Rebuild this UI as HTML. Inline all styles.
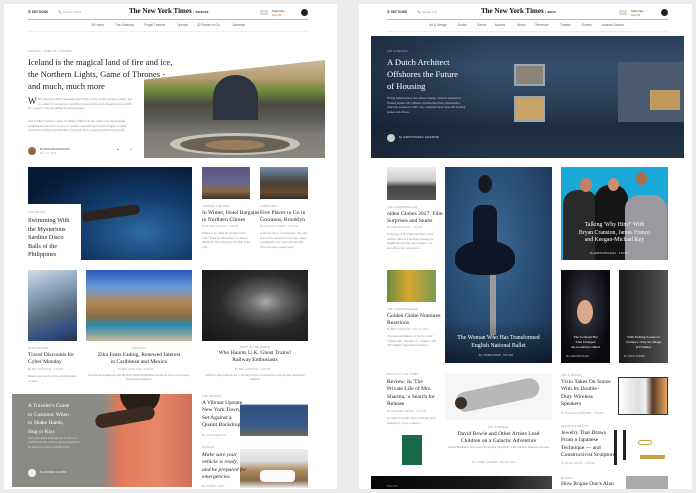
<!DOCTYPE html>
<html><head><meta charset="utf-8"><style>
*{margin:0;padding:0;box-sizing:border-box}
body{width:696px;height:493px;background:#ececec;position:relative;overflow:hidden;font-family:"Liberation Serif",serif;color:#222}
.a{position:absolute}
.p{background:#fff}
.sans{font-family:"Liberation Sans",sans-serif}
.k{font-family:"Liberation Sans",sans-serif;font-size:2.6px;color:#999;letter-spacing:.2px;white-space:nowrap}
.h{font-size:5.6px;line-height:7.3px;color:#222}
.b{font-size:3px;line-height:4.6px;color:#888}
.by{font-family:"Liberation Sans",sans-serif;font-size:2.6px;color:#aaa;white-space:nowrap}
.nav{font-family:"Liberation Sans",sans-serif;font-size:3.2px;color:#666;white-space:nowrap}
.logo{font-family:"Liberation Serif",serif;font-weight:bold;font-size:7px;color:#111;white-space:nowrap}
.rule{height:1px;background:#bbb}
.lrule{height:1px;background:#eee}
</style></head><body>

<!-- LEFT PANEL -->
<div class="a p" style="left:4px;top:4px;width:333px;height:485px"></div>
<div class="a sans" style="left:28px;top:10px;font-size:3.2px;font-weight:bold;color:#333">☰ SECTIONS</div>
<div class="a sans" style="left:58px;top:10px;font-size:3px;color:#999">🔍 Search Travel</div>
<div class="a logo" style="left:129px;top:7px">The New York Times <span style="font-size:3.5px">| TRAVEL</span></div>
<div class="a" style="left:260px;top:10px;width:8px;height:5px;background:#ddd"></div>
<div class="a sans" style="left:272px;top:9px;font-size:2.8px;color:#333">Subscribe<br><span style="color:#c60">Now $1</span></div>
<div class="a" style="left:301px;top:9px;width:7px;height:7px;border-radius:50%;background:#222"></div>
<div class="a rule" style="left:28px;top:19px;width:280px"></div>
<div class="a nav" style="left:91px;top:23px">36 Hours</div>
<div class="a nav" style="left:115px;top:23px">The Getaway</div>
<div class="a nav" style="left:144px;top:23px">Frugal Traveler</div>
<div class="a nav" style="left:177px;top:23px">Opinion</div>
<div class="a nav" style="left:197px;top:23px">52 Places to Go</div>
<div class="a nav" style="left:232px;top:23px">Journeys</div>
<div class="a lrule" style="left:28px;top:31px;width:280px"></div>

<div class="a k" style="left:28px;top:50px">ICELAND · GAME OF THRONES</div>
<div class="a" style="left:28px;top:56px;font-size:8.6px;line-height:12px;white-space:nowrap;color:#222">Iceland is the magical land of fire and ice,<br>the Northern Lights, Game of Thrones -<br>and much, much more</div>
<div class="a b" style="left:28px;top:97px;width:105px"><span style="font-size:9px;float:left;line-height:8px;color:#222;margin-right:2px">W</span>ith cheap and 100% renewable electricity, it's the world's greatest country, has no armed forces and has cheerfully bounced back from financial ruin in 2008. It's a place to stay and admire in equal measure.</div>
<div class="a b" style="left:28px;top:119px;width:105px">And northern Iceland, a mere 55-minute flight from the capital over the beautiful, uninhabitable interior is a place of wonder, with dancing Northern Lights, weirdly beautiful lava fields, innumerable volcanoes, snow-capped mountains and fjords.</div>
<div class="a" style="left:28px;top:147px;width:8px;height:8px;border-radius:50%;background:#8a6a4a"></div>
<div class="a by" style="left:40px;top:148px;color:#444">By RICHARD MORGANS</div>
<div class="a by" style="left:40px;top:152px">Dec. 23, 2016</div>
<div class="a by" style="left:117px;top:148px;color:#333">➦</div>
<div class="a by" style="left:130px;top:148px;color:#333">▯</div>
<!-- hero -->
<div class="a" style="left:144px;top:60px;width:181px;height:98px;background:linear-gradient(180deg,#c9b99b 0%,#b79e74 18%,#6a8a3a 32%,#4d4a42 45%,#5c5b58 60%,#7d7b77 75%,#8c8780 100%);clip-path:polygon(0 20%,60% 8%,100% 0,100% 100%,0 100%)"></div>
<div class="a" style="left:213px;top:75px;width:45px;height:45px;border-radius:22px 22px 0 0;background:#2d3440"></div>
<div class="a" style="left:170px;top:133px;width:130px;height:22px;border-radius:50%;background:#c9c4b9"></div>
<div class="a" style="left:180px;top:136px;width:110px;height:17px;border-radius:50%;background:#6a6256"></div>
<div class="a" style="left:205px;top:140px;width:60px;height:10px;border-radius:50%;background:#9a7d5a"></div>

<!-- row 2 -->
<div class="a" style="left:28px;top:167px;width:164px;height:93px;background:radial-gradient(ellipse at 70% 70%,#2f6aa3 0%,#123a6a 40%,#061a35 80%)"></div>
<div class="a" style="left:82px;top:208px;width:58px;height:10px;border-radius:5px;background:#2b2420;transform:rotate(-8deg)"></div>
<div class="a p" style="left:28px;top:204px;width:53px;height:56px"></div>
<div class="a k" style="left:28px;top:211px">TRILOBITES</div>
<div class="a" style="left:28px;top:217px;font-size:6.3px;line-height:8.6px;white-space:nowrap">Swimming With<br>the Mysterious<br>Sardine Disco<br>Balls of the<br>Philippines</div>

<div class="a" style="left:202px;top:167px;width:48px;height:32px;background:linear-gradient(180deg,#5a5580 0%,#6a6590 50%,#8a6a3a 75%,#3a3028 100%)"></div>
<div class="a k" style="left:202px;top:205px">CHASING THE DEAL</div>
<div class="a h" style="left:202px;top:210px;white-space:nowrap">In Winter, Hotel Bargains<br>in Northern Climes</div>
<div class="a by" style="left:202px;top:225px">By ELAINE GLUSAC · 3:29 PM</div>
<div class="a b" style="left:202px;top:231px;width:48px">Where to go when the weather turns cold? There are discounts to be had in Montreal, New York City and Salt Lake City.</div>

<div class="a" style="left:260px;top:167px;width:48px;height:32px;background:linear-gradient(180deg,#6a8aa8 0%,#4a4038 50%,#6a4a30 80%,#2a2a2a 100%)"></div>
<div class="a k" style="left:260px;top:205px">SURFACING</div>
<div class="a h" style="left:260px;top:210px;white-space:nowrap">Five Places to Go in<br>Gowanus, Brooklyn</div>
<div class="a by" style="left:260px;top:225px">By ANTHONY TOMAS · 3:29 PM</div>
<div class="a b" style="left:260px;top:231px;width:48px">A diverse array of restaurants, bars and stores have opened in Gowanus, where a manmade toxic canal and desolate vibe once kept people away.</div>

<!-- row 3 -->
<div class="a" style="left:28px;top:270px;width:49px;height:71px;background:linear-gradient(160deg,#d8dde3 0%,#8aa6c0 30%,#5a6a80 60%,#2a4a80 85%,#333 100%)"></div>
<div class="a k" style="left:28px;top:347px">BOOK REVIEW</div>
<div class="a h" style="left:28px;top:352px;white-space:nowrap">Travel Discounts for<br>Cyber Monday</div>
<div class="a by" style="left:28px;top:368px">By BEN HOPGOOD · 9:25 PM</div>
<div class="a b" style="left:28px;top:374px;width:48px">Resorts and hotels will be offering sales on stays.</div>

<div class="a" style="left:86px;top:270px;width:106px;height:71px;background:linear-gradient(180deg,#2a5ab8 0%,#6a9ad8 25%,#b08a5a 45%,#8a6a40 65%,#2a8ab0 78%,#c8b898 100%)"></div>
<div class="a k" style="left:131px;top:347px">TRENDING</div>
<div class="a h" style="left:86px;top:352px;width:106px;text-align:center;white-space:nowrap">Zika Fears Fading, Renewed Interest<br>in Caribbean and Mexico</div>
<div class="a by" style="left:118px;top:368px">By BEN HOPGOOD · 9:25 PM</div>
<div class="a b" style="left:86px;top:374px;width:106px;text-align:center;font-size:2.6px;line-height:4px">Travelers are booking trips after the World Health Organization said that the virus was no longer a global health emergency.</div>

<div class="a" style="left:202px;top:270px;width:106px;height:71px;background:radial-gradient(ellipse at 60% 45%,#aaa 0%,#666 20%,#2a2a2a 50%,#161616 100%)"></div>
<div class="a k" style="left:240px;top:346px">WHAT IN THE WORLD</div>
<div class="a h" style="left:202px;top:350px;width:106px;text-align:center;white-space:nowrap">Who Haunts U.K. Ghost Trains?<br>Railway Enthusiasts</div>
<div class="a by" style="left:235px;top:368px">By BEN HOPGOOD · 9:25 PM</div>
<div class="a b" style="left:202px;top:374px;width:106px;text-align:center;font-size:2.6px;line-height:4px">In Britain, ghost trains are real — but they're more of a bureaucratic curiosity than a Halloween nightmare.</div>

<!-- row 4 -->
<div class="a" style="left:12px;top:394px;width:180px;height:93px;background:linear-gradient(90deg,#8a8b85 0%,#8a8b85 50%,#e07a5a 60%,#e8876a 80%,#d07058 100%)"></div>
<div class="a" style="left:120px;top:394px;width:40px;height:20px;border-radius:0 0 20px 20px;background:#2a1e18"></div>
<div class="a" style="left:95px;top:410px;width:60px;height:14px;border-radius:7px;background:#3a2a22;transform:rotate(-10deg)"></div>
<div class="a" style="left:28px;top:402px;font-size:5.5px;line-height:8.5px;color:#fff;white-space:nowrap">A Traveler's Guide<br>to Customs: When<br>to Shake Hands,<br>Hug or Kiss</div>
<div class="a b" style="left:28px;top:437px;width:52px;color:#ddd;font-size:2.6px;line-height:4.3px">You've just landed in Beijing, Rio de Janeiro or Christchurch, New Zealand, and you're greeted at the airport by a clutch of adoring locals.</div>
<div class="a" style="left:28px;top:469px;width:8px;height:8px;border-radius:50%;background:#eee"></div>
<div class="a by" style="left:40px;top:471px;color:#eee">By ANDREW JACOBS</div>

<div class="a k" style="left:202px;top:395px">THE GETAWAY</div>
<div class="a" style="left:240px;top:398px;width:68px;height:38px;background:linear-gradient(180deg,#fff 0%,#fff 15%,#2e4e7e 20%,#3a5a8a 75%,#6a6a58 100%)"></div>
<div class="a h" style="left:202px;top:400px;white-space:nowrap">A Vibrant Upstate<br>New York Town,<br>Set Against a<br>Quaint Backdrop</div>
<div class="a by" style="left:202px;top:434px">By LAURA NEILSON</div>
<div class="a k" style="left:202px;top:446px">OPINION</div>
<div class="a" style="left:240px;top:449px;width:68px;height:39px;background:linear-gradient(180deg,#eee 0%,#ddd 30%,#b08a60 55%,#8a6a48 80%,#eee 100%)"></div>
<div class="a" style="left:260px;top:470px;width:35px;height:12px;border-radius:4px;background:#fafafa"></div>
<div class="a h" style="left:202px;top:452px;font-style:italic;white-space:nowrap">Make sure your<br>vehicle is ready,<br>and be prepared for<br>emergencies</div>
<div class="a by" style="left:202px;top:485px">By LAUREN HARD</div>

<!-- RIGHT PANEL -->
<div class="a p" style="left:359px;top:4px;width:333px;height:485px"></div>
<div class="a sans" style="left:387px;top:10px;font-size:3.2px;font-weight:bold;color:#333">☰ SECTIONS</div>
<div class="a sans" style="left:417px;top:10px;font-size:3px;color:#999">🔍 Search Arts</div>
<div class="a logo" style="left:481px;top:7px">The New York Times <span style="font-size:3.5px">| ARTS</span></div>
<div class="a" style="left:619px;top:10px;width:8px;height:5px;background:#ddd"></div>
<div class="a sans" style="left:631px;top:9px;font-size:2.8px;color:#333">Subscribe<br><span style="color:#c60">Now $1</span></div>
<div class="a" style="left:661px;top:9px;width:7px;height:7px;border-radius:50%;background:#222"></div>
<div class="a rule" style="left:387px;top:19px;width:281px"></div>
<div class="a nav" style="left:429px;top:23px">Art &amp; Design</div>
<div class="a nav" style="left:458px;top:23px">Books</div>
<div class="a nav" style="left:477px;top:23px">Dance</div>
<div class="a nav" style="left:495px;top:23px">Movies</div>
<div class="a nav" style="left:517px;top:23px">Music</div>
<div class="a nav" style="left:535px;top:23px">Television</div>
<div class="a nav" style="left:560px;top:23px">Theater</div>
<div class="a nav" style="left:582px;top:23px">Events</div>
<div class="a nav" style="left:602px;top:23px">Awards Season</div>
<div class="a lrule" style="left:387px;top:31px;width:281px"></div>

<div class="a" style="left:371px;top:36px;width:313px;height:122px;background:linear-gradient(180deg,#2a3e5a 0%,#34506e 25%,#2b3f58 55%,#1c2c40 75%,#233648 100%)"></div>
<div class="a" style="left:514px;top:96px;width:31px;height:26px;background:#c8a468;border:2px solid #9aa6b4"></div>
<div class="a" style="left:514px;top:64px;width:31px;height:22px;background:#8a8478;border:2px solid #9aa6b4"></div>
<div class="a" style="left:618px;top:62px;width:66px;height:60px;background:#4a5a70"></div>
<div class="a" style="left:650px;top:90px;width:30px;height:20px;background:#c09a5a"></div>
<div class="a" style="left:371px;top:36px;width:120px;height:122px;background:linear-gradient(90deg,rgba(20,30,45,.6),rgba(20,30,45,0))"></div>
<div class="a k" style="left:387px;top:50px;color:#aab">ART &amp; DESIGN</div>
<div class="a" style="left:387px;top:56px;font-size:8.6px;line-height:12px;color:#fff;white-space:nowrap">A Dutch Architect<br>Offshores the Future<br>of Housing</div>
<div class="a b" style="left:387px;top:96px;width:80px;color:#ccd">Facing limited space and climate change, a Dutch designer in floating homes. Mr. Olthuis's architectural firm, Waterstudio, which he founded in 2003, has completed more than 200 floating homes and offices.</div>
<div class="a" style="left:387px;top:134px;width:8px;height:8px;border-radius:50%;background:#ccc"></div>
<div class="a by" style="left:399px;top:136px;color:#ddd">By CHRISTOPHER F. SCHUETZE</div>

<!-- row2 right -->
<div class="a" style="left:387px;top:167px;width:49px;height:33px;background:linear-gradient(180deg,#eee 0%,#ccc 40%,#444 60%,#555 100%)"></div>
<div class="a k" style="left:387px;top:206px">THE CARPETBAGGER</div>
<div class="a h" style="left:387px;top:211px;white-space:nowrap">olden Globes 2017: Film<br>Surprises and Snubs</div>
<div class="a by" style="left:387px;top:226px">By CARA BUCKLEY · 3:19 PM</div>
<div class="a b" style="left:387px;top:232px;width:49px">In the age of the Fitbit and more active retirees, there is a growing demand for neighborhoods that don't require a car and offer a mix of services.</div>

<div class="a" style="left:445px;top:167px;width:107px;height:196px;background:radial-gradient(ellipse at 45% 40%,#3d6a94 0%,#2a5078 45%,#1a3350 100%)"></div>
<div class="a" style="left:478px;top:175px;width:14px;height:18px;border-radius:50%;background:#1a1a22"></div>
<div class="a" style="left:473px;top:205px;width:24px;height:40px;background:#101828;border-radius:8px 8px 4px 4px"></div>
<div class="a" style="left:455px;top:240px;width:60px;height:35px;border-radius:50% 50% 40% 40%;background:#0e1626"></div>
<div class="a" style="left:490px;top:275px;width:6px;height:60px;background:#9a9a9a"></div>
<div class="a" style="left:445px;top:320px;width:107px;height:43px;background:linear-gradient(180deg,rgba(0,0,0,0),rgba(0,0,0,.5))"></div>
<div class="a" style="left:445px;top:334px;width:107px;text-align:center;font-size:5.8px;line-height:8px;color:#fff;white-space:nowrap">The Woman Who Has Transformed<br>English National Ballet</div>
<div class="a by" style="left:479px;top:354px;color:#ccc">By YASMIN STEIN · 9:57 PM</div>

<div class="a" style="left:561px;top:167px;width:107px;height:93px;background:#1aa8d8"></div>
<div class="a" style="left:563px;top:190px;width:35px;height:70px;border-radius:14px 14px 0 0;background:#2a2a2a"></div>
<div class="a" style="left:595px;top:185px;width:33px;height:75px;border-radius:14px 14px 0 0;background:#151515"></div>
<div class="a" style="left:625px;top:195px;width:42px;height:65px;border-radius:14px 14px 0 0;background:#9a9a9e"></div>
<div class="a" style="left:580px;top:178px;width:12px;height:14px;border-radius:50%;background:#c08060"></div>
<div class="a" style="left:608px;top:178px;width:11px;height:13px;border-radius:50%;background:#c89070"></div>
<div class="a" style="left:636px;top:172px;width:11px;height:13px;border-radius:50%;background:#a87050"></div>
<div class="a" style="left:561px;top:222px;width:107px;height:23px;text-align:center;font-size:5.8px;line-height:7.5px;color:#fff;white-space:nowrap">Talking 'Why Him?' With<br>Bryan Cranston, James Franco<br>and Keegan-Michael Key</div>
<div class="a by" style="left:590px;top:252px;color:#ddd">By MARTIN BUCKLEY · 3:59 PM</div>

<div class="a" style="left:387px;top:270px;width:49px;height:32px;background:linear-gradient(90deg,#6a8a40,#d8a830 45%,#7a9a50)"></div>
<div class="a k" style="left:387px;top:308px">THE CARPETBAGGER</div>
<div class="a h" style="left:387px;top:313px;white-space:nowrap">Golden Globe Nominee<br>Reactions</div>
<div class="a by" style="left:387px;top:328px">By BEN HOPGOOD · Dec 12, 2016</div>
<div class="a b" style="left:387px;top:334px;width:49px">The stars and makers of "La La Land," "Westworld," "Deadpool," "Atlanta" and "Moonlight" enjoy their moments.</div>

<div class="a" style="left:561px;top:270px;width:49px;height:93px;background:radial-gradient(ellipse at 50% 40%,#3a3a48 0%,#0a0a10 70%)"></div>
<div class="a" style="left:577px;top:300px;width:16px;height:24px;border-radius:50%;background:#d8a888"></div>
<div class="a" style="left:561px;top:335px;width:49px;text-align:center;font-size:3.5px;line-height:5px;color:#fff;white-space:nowrap">The Cocktail Hat<br>That Changed<br>the Academy's Mind</div>
<div class="a by" style="left:566px;top:355px;color:#ccc">By CARA BUCKLEY</div>
<div class="a" style="left:619px;top:270px;width:49px;height:93px;background:linear-gradient(90deg,#1a1a1a,#3a3a3a 60%,#555)"></div>
<div class="a" style="left:619px;top:335px;width:49px;text-align:center;font-size:3.5px;line-height:5px;color:#fff;white-space:nowrap">With Pulsing Sound on<br>Trumpet, Only the Shape<br>Is Familiar</div>
<div class="a by" style="left:624px;top:355px;color:#ccc">By NATE CHINEN</div>

<!-- row3 right -->
<div class="a k" style="left:387px;top:373px">BOOKS OF THE TIMES</div>
<div class="a h" style="left:387px;top:379px;white-space:nowrap">Review: In 'The<br>Private Life of Mrs.<br>Sharma,' a Search for<br>Release</div>
<div class="a by" style="left:387px;top:410px">By JENNIFER SENIOR · 3:29 PM</div>
<div class="a b" style="left:387px;top:416px;width:49px">A woman in Delhi whose brain has been annexed by worry comes to...</div>
<div class="a" style="left:402px;top:435px;width:20px;height:30px;background:#1a6a4a"></div>

<div class="a" style="left:445px;top:373px;width:107px;height:47px;background:#f6f6f6"></div>
<div class="a" style="left:455px;top:385px;width:85px;height:20px;border-radius:10px;background:#b8b8b8;transform:rotate(-12deg)"></div>
<div class="a" style="left:455px;top:397px;width:12px;height:12px;border-radius:50%;background:#3a3028"></div>
<div class="a k" style="left:488px;top:426px">ART &amp; DESIGN</div>
<div class="a h" style="left:445px;top:431px;width:107px;text-align:center;white-space:nowrap">David Bowie and Other Artists Lead<br>Children on a Galactic Adventure</div>
<div class="a b" style="left:445px;top:446px;width:107px;text-align:center;font-size:2.6px;line-height:4px">Thomas Broadbent's 2016 watercolor on paper "Spaceman" at the Children's Museum of the Arts.</div>
<div class="a by" style="left:472px;top:461px">By LAUREL GRABER · Nov 18, 2016</div>

<div class="a k" style="left:561px;top:374px">ART &amp; DESIGN</div>
<div class="a h" style="left:561px;top:379px;white-space:nowrap">Vizio Takes On Sonos<br>With Its Double-<br>Duty Wireless<br>Speakers</div>
<div class="a by" style="left:561px;top:412px">By RICHARD SANDOMIR · 3:29 PM</div>
<div class="a" style="left:618px;top:377px;width:50px;height:38px;background:linear-gradient(90deg,#fff 0%,#ddd 40%,#f0f0f0 55%,#5a3a28 70%,#e8a860 100%);border:1px solid #333"></div>
<div class="a k" style="left:561px;top:425px">FASHION &amp; BEAUTY</div>
<div class="a h" style="left:561px;top:430px;white-space:nowrap">Jewelry That Draws<br>From a Japanese<br>Technique — and<br>Constructivist Sculpture</div>
<div class="a by" style="left:561px;top:462px">By HILARY MOSS · 3:29 PM</div>
<div class="a" style="left:614px;top:430px;width:3px;height:35px;background:#222"></div>
<div class="a" style="left:623px;top:430px;width:3px;height:30px;background:#222"></div>
<div class="a" style="left:638px;top:440px;width:14px;height:5px;border:1px solid #c9a040;border-radius:3px"></div>
<div class="a" style="left:640px;top:455px;width:25px;height:4px;background:#c9a040"></div>

<!-- row4 right -->
<div class="a" style="left:371px;top:476px;width:181px;height:13px;background:linear-gradient(90deg,#050505,#1a1a1a 70%,#444)"></div>
<div class="a k" style="left:387px;top:485px;color:#888">DESIGN</div>
<div class="a k" style="left:561px;top:477px">MOVIES</div>
<div class="a h" style="left:561px;top:481px;white-space:nowrap">How Rogue One's Alan</div>
<div class="a" style="left:626px;top:476px;width:42px;height:13px;background:#aaa"></div>
</body></html>
